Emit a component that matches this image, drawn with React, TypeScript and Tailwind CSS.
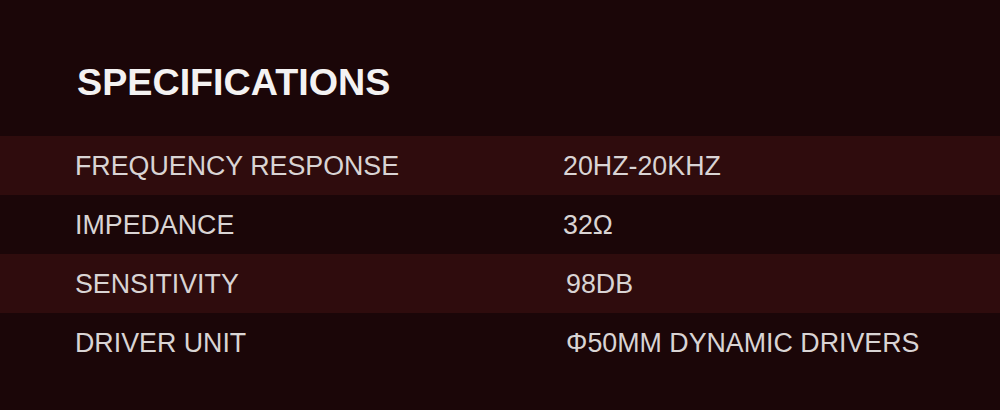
import React from "react";

const rows = [
  { k: "FREQUENCY RESPONSE", v: "20HZ-20KHZ", striped: true, off: "pl-0" },
  { k: "IMPEDANCE", v: "32Ω", striped: false, off: "pl-0" },
  { k: "SENSITIVITY", v: "98DB", striped: true, off: "pl-[3px]" },
  { k: "DRIVER UNIT", v: "Φ50MM DYNAMIC DRIVERS", striped: false, off: "pl-[3px]" },
];

export default function App() {
  return (
    <div
      className="w-[1000px] h-[410px] bg-[#1b0608] overflow-hidden"
      style={{ fontFamily: '"Liberation Sans", Arial, sans-serif' }}
    >
      <div className="h-[136px] pl-[77px] pt-[58px]">
        <h1 className="text-[37.7px] leading-[48px] font-bold text-[#f4f2f2]">
          SPECIFICATIONS
        </h1>
      </div>
      <div className="flex flex-col">
        {rows.map((r, i) => (
          <div
            key={i}
            className={`flex items-center h-[59px] pl-[75px] pt-[2px] text-[26.8px] text-[#d9d4d4] ${
              r.striped ? "bg-[#2f0c0d]" : ""
            }`}
          >
            <span className="w-[488px] shrink-0">{r.k}</span>
            <span className={r.off}>{r.v}</span>
          </div>
        ))}
      </div>
    </div>
  );
}
